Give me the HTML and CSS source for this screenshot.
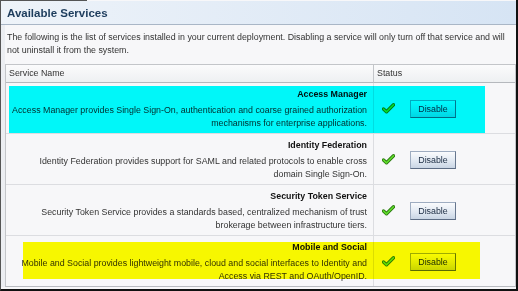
FILE: index.html
```html
<!DOCTYPE html>
<html lang="en">
<head>
    <meta charset="UTF-8">
    <title>Available Services</title>
    <link rel="stylesheet" href="styles.css">
</head>
<body>
<div class="frame">
    <div class="tabline"></div>
    <div class="header">
        <h2>Available Services</h2>
    </div>
    <div class="content">
        <p class="intro">The following is the list of services installed in your current deployment. Disabling a service will only turn off that service and will not uninstall it from the system.</p>
        <div class="services">
            <div class="head name">Service Name</div>
            <div class="head status">Status</div>

            <div class="row">
                <div class="mark mark-cyan"></div>
                <div class="cell name">
                    <span class="title">Access Manager</span>
                    <span class="desc">Access Manager provides Single Sign-On, authentication and coarse grained authorization mechanisms for enterprise applications.</span>
                </div>
                <div class="cell status">
                    <svg class="check" width="13" height="11" viewBox="0 0 13 11"><path d="M1.5 6 L4.5 8.8 L11.5 1.8" fill="none" stroke="#2d7a12" stroke-width="3.4" stroke-linecap="round" stroke-linejoin="round"/><path d="M1.5 6 L4.5 8.8 L11.5 1.8" fill="none" stroke="#62e02c" stroke-width="1.6" stroke-linecap="round" stroke-linejoin="round"/></svg>
                    <span class="button">Disable</span>
                </div>
            </div>

            <div class="row">
                <div class="cell name">
                    <span class="title">Identity Federation</span>
                    <span class="desc">Identity Federation provides support for SAML and related protocols to enable cross domain Single Sign-On.</span>
                </div>
                <div class="cell status">
                    <svg class="check" width="13" height="11" viewBox="0 0 13 11"><path d="M1.5 6 L4.5 8.8 L11.5 1.8" fill="none" stroke="#2d7a12" stroke-width="3.4" stroke-linecap="round" stroke-linejoin="round"/><path d="M1.5 6 L4.5 8.8 L11.5 1.8" fill="none" stroke="#62e02c" stroke-width="1.6" stroke-linecap="round" stroke-linejoin="round"/></svg>
                    <span class="button">Disable</span>
                </div>
            </div>

            <div class="row">
                <div class="cell name">
                    <span class="title">Security Token Service</span>
                    <span class="desc">Security Token Service provides a standards based, centralized mechanism of trust brokerage between infrastructure tiers.</span>
                </div>
                <div class="cell status">
                    <svg class="check" width="13" height="11" viewBox="0 0 13 11"><path d="M1.5 6 L4.5 8.8 L11.5 1.8" fill="none" stroke="#2d7a12" stroke-width="3.4" stroke-linecap="round" stroke-linejoin="round"/><path d="M1.5 6 L4.5 8.8 L11.5 1.8" fill="none" stroke="#62e02c" stroke-width="1.6" stroke-linecap="round" stroke-linejoin="round"/></svg>
                    <span class="button">Disable</span>
                </div>
            </div>

            <div class="row last">
                <div class="mark mark-yellow"></div>
                <div class="cell name">
                    <span class="title">Mobile and Social</span>
                    <span class="desc">Mobile and Social provides lightweight mobile, cloud and social interfaces to Identity and Access via REST and OAuth/OpenID.</span>
                </div>
                <div class="cell status">
                    <svg class="check" width="13" height="11" viewBox="0 0 13 11"><path d="M1.5 6 L4.5 8.8 L11.5 1.8" fill="none" stroke="#2d7a12" stroke-width="3.4" stroke-linecap="round" stroke-linejoin="round"/><path d="M1.5 6 L4.5 8.8 L11.5 1.8" fill="none" stroke="#62e02c" stroke-width="1.6" stroke-linecap="round" stroke-linejoin="round"/></svg>
                    <span class="button">Disable</span>
                </div>
            </div>
        </div>
    </div>
</div>
</body>
</html>
```

FILE: styles.css
```css
body {
    margin: 0;
    font-family: "Liberation Sans", Arial, sans-serif;
    font-size: 8.85px;
    color: #333;
    background: #fff;
}
.frame {
    width: 518px;
    height: 291px;
    box-sizing: border-box;
    border-left: 1px solid #555;
    border-right: 2px solid #111;
    border-bottom: 2px solid #111;
    overflow: hidden;
    background: #f7f7f9;
}
.tabline {
    width: 86px;
    height: 1px;
    background: #555;
}
.header {
    height: 24px;
    box-sizing: border-box;
    padding: 5px 6px 0;
    background: linear-gradient(to right, #eef3f9, #d6e4f4);
    border-bottom: 1px solid #a9b6c6;
}
h2 {
    margin: 0;
    font-size: 11.5px;
    line-height: 14px;
    color: #1d3c5c;
}
.content {
    padding: 0 0 0 4px;
    border-left: 4px solid transparent;
    border-image: linear-gradient(to right, #eceef2, #c8ccdc 60%, #e2e4ec) 1;
}
.intro {
    margin: 0 0 0 -4px;
    padding: 6px 2px 0 2px;
    line-height: 13px;
    height: 33px;
}
.services {
    display: grid;
    grid-template-columns: 368px 1fr;
    margin-left: -4px;
    border: 1px solid #c3c5c9;
    border-bottom-color: #b8bbc0;
}
.head {
    height: 17px;
    line-height: 17px;
    padding-left: 3px;
    background: linear-gradient(#fbfbfc, #eef0f2);
    border-bottom: 1px solid #b5b8bd;
}
.head.name {
    border-right: 1px solid #c3c5c9;
}
.row {
    grid-column: 1 / 3;
    display: grid;
    grid-template-columns: 368px 1fr;
    height: 50px;
    position: relative;
    border-bottom: 1px solid #dcdde1;
}
.row.last {
    border-bottom: none;
}
.cell.name {
    border-right: 1px solid #dcdde1;
    text-align: right;
    padding: 5px 6px 0 6px;
}
.title {
    display: block;
    font-weight: bold;
    color: #111;
    line-height: 13px;
    margin-bottom: 3px;
}
.desc {
    display: block;
    line-height: 13px;
}
.cell.status {
    display: flex;
    align-items: center;
    padding: 1px 0 0 8px;
}
.check {
    margin-right: 15px;
}
.button {
    display: inline-block;
    width: 44px;
    height: 16px;
    line-height: 16px;
    text-align: center;
    color: #1a2b42;
    border: 1px solid #9eacc0;
    border-right-color: #66768e;
    border-bottom-color: #5c6c84;
    background: linear-gradient(#fafbfd, #dfe7f1 60%, #c9d5e4);
}
.mark {
    position: absolute;
    mix-blend-mode: multiply;
    pointer-events: none;
    z-index: 2;
}
.mark-cyan {
    background: #00ffff;
    left: 3px;
    top: 3px;
    width: 476px;
    height: 47px;
}
.mark-yellow {
    background: #ffff00;
    left: 17px;
    top: 6px;
    width: 457px;
    height: 37px;
}
```
